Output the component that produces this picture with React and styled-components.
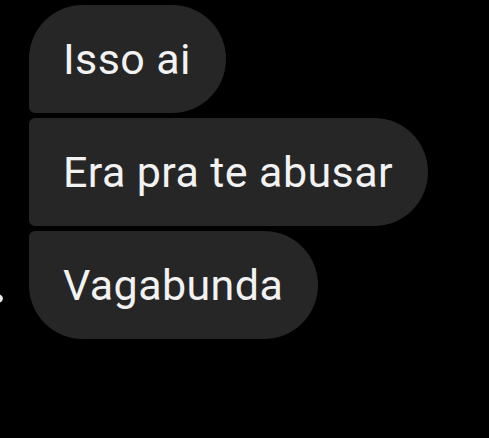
import styled, { createGlobalStyle } from "styled-components"

const GlobalStyle = createGlobalStyle`
  html, body {
    margin: 0;
    padding: 0;
    background: #000;
  }
  body {
    font-family: Roboto, "Noto Sans", sans-serif;
  }
`

const Thread = styled.div`
  width: 489px;
  height: 438px;
  background: #000;
  padding-top: 5px;
  box-sizing: border-box;
  display: flex;
  flex-direction: column;
  gap: 5px;
  overflow: hidden;
`

const Row = styled.div`
  display: flex;
  align-items: center;
`

const Gutter = styled.div`
  width: 29px;
  flex-shrink: 0;
  display: flex;
  align-items: center;
  overflow: hidden;
`

const AvatarEdge = styled.div`
  width: 20px;
  height: 11px;
  margin-left: -17px;
  margin-top: 26px;
  border-radius: 50%;
  background: #e8e8e8;
`

const radii = {
  first: "54px 54px 54px 6px",
  middle: "6px 54px 54px 6px",
  last: "6px 54px 54px 54px",
}

const Bubble = styled.div`
  height: 108px;
  box-sizing: border-box;
  padding: 0 35px 0 34px;
  display: flex;
  align-items: center;
  background: #262626;
  color: #f2f2f2;
  font-size: 43px;
  letter-spacing: 0.4px;
  border-radius: ${({ $pos }) => radii[$pos]};
  white-space: nowrap;
`

const messages = [
  { text: "Isso ai", pos: "first" },
  { text: "Era pra te abusar", pos: "middle" },
  { text: "Vagabunda", pos: "last", avatar: true },
]

function App() {
  return (
    <>
      <GlobalStyle />
      <Thread>
        {messages.map((m, i) => (
          <Row key={i}>
            <Gutter>{m.avatar && <AvatarEdge />}</Gutter>
            <Bubble $pos={m.pos}>{m.text}</Bubble>
          </Row>
        ))}
      </Thread>
    </>
  )
}

export default App
